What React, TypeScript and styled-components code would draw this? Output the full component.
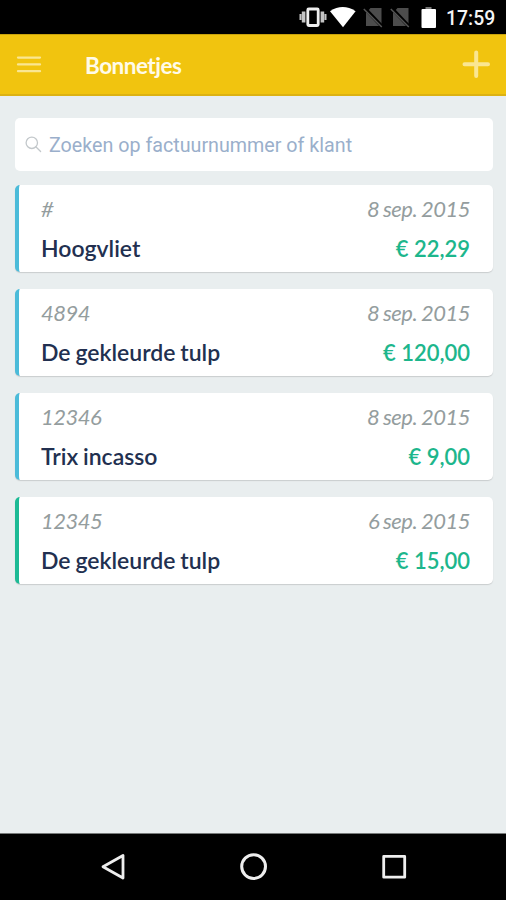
import React from 'react';
import styled, { createGlobalStyle } from 'styled-components';

const GlobalStyle = createGlobalStyle`
  * { box-sizing: border-box; }
  body { margin: 0; background: #e9eeef; }
`;

const Screen = styled.div`
  display: flex;
  flex-direction: column;
  width: 506px;
  height: 900px;
  overflow: hidden;
  background: #e9eeef;
  font-family: Lato, sans-serif;
`;

const StatusBar = styled.div`
  flex: none;
  display: flex;
  align-items: center;
  justify-content: flex-end;
  height: 34px;
  padding-right: 11px;
  background: #000;
`;

const StatusIcons = styled.svg`
  display: block;
  width: 146px;
  height: 34px;
`;

const Clock = styled.span`
  width: 49px;
  margin-left: 2px;
  color: #f4f4f4;
  font: 500 19.4px/34px Roboto, sans-serif;
  text-align: right;
  white-space: nowrap;
  padding-top: 3px;
`;

const AppBar = styled.header`
  flex: none;
  display: flex;
  align-items: center;
  height: 62px;
  padding: 0 15px 0 16px;
  background: #f1c40f;
  border-top: 1px solid #c9a30c;
  border-bottom: 2px solid #dcb212;
`;

const IconButton = styled.button`
  display: flex;
  padding: 0;
  border: 0;
  background: none;
  svg { display: block; }
`;

const Title = styled.h1`
  flex: 1;
  margin: 2px 0 0 43px;
  color: #fffbe9;
  font-size: 22.5px;
  line-height: 28px;
  font-weight: 700;
  letter-spacing: -0.5px;
`;

const Content = styled.main`
  flex: 1;
  display: flex;
  flex-direction: column;
  padding: 22px 13px 0 15px;
`;

const SearchBox = styled.label`
  display: flex;
  align-items: center;
  height: 53px;
  margin-bottom: 14px;
  padding-left: 10px;
  border-radius: 5px;
  background: #fff;
  svg { flex: none; display: block; }
`;

const SearchInput = styled.input`
  flex: 1;
  margin-left: 7px;
  padding: 3px 0 0;
  border: 0;
  outline: 0;
  background: none;
  font: 400 19.7px/26px Roboto, sans-serif;
  &::placeholder { color: #9aafcb; opacity: 1; }
`;

const ReceiptList = styled.div`
  display: flex;
  flex-direction: column;
  gap: 17px;
`;

const Receipt = styled.article<{ $accent: string }>`
  display: grid;
  grid-template-columns: 1fr auto;
  grid-template-rows: 38px 39px;
  height: 87px;
  padding: 5px 23px 0 22px;
  border-left: 4px solid ${(p) => p.$accent};
  border-radius: 5px;
  background: #fff;
  box-shadow: 0 1px 1px #c9cdce;
  white-space: nowrap;
`;

const ReceiptNumber = styled.span`
  color: #949d9e;
  font-size: 22px;
  line-height: 38px;
  font-style: italic;
  font-weight: 400;
  letter-spacing: -0.5px;
`;

const ReceiptDate = styled(ReceiptNumber)`
  text-align: right;
  word-spacing: -0.8px;
`;

const Customer = styled.span`
  color: #223050;
  font-size: 23px;
  line-height: 40px;
  font-weight: 600;
  word-spacing: -0.9px;
`;

const Amount = styled.span`
  color: #1db68c;
  font-size: 22px;
  line-height: 41px;
  font-weight: 600;
  text-align: right;
`;

const NavBar = styled.nav`
  flex: none;
  display: flex;
  align-items: center;
  justify-content: space-between;
  height: 67px;
  padding: 0 98px 0 100px;
  background: #000;
  border-top: 1px solid #777a7a;
`;

const BLUE = '#4bbbd9';
const GREEN = '#1dba95';

const receipts = [
  { id: '#', date: '8 sep. 2015', customer: 'Hoogvliet', amount: '€ 22,29', accent: BLUE },
  { id: '4894', date: '8 sep. 2015', customer: 'De gekleurde tulp', amount: '€ 120,00', accent: BLUE },
  { id: '12346', date: '8 sep. 2015', customer: 'Trix incasso', amount: '€ 9,00', accent: BLUE },
  { id: '12345', date: '6 sep. 2015', customer: 'De gekleurde tulp', amount: '€ 15,00', accent: GREEN },
];

export default function App() {
  return (
    <Screen>
      <GlobalStyle />
      <StatusBar>
        <StatusIcons viewBox="298 0 146 34">
          <path
            d="M299.5 14h2v6h-2zM301.8 11.5h3.6v11h-3.6zM320.6 11.5h3.6v11h-3.6zM324.5 14h2v6h-2z"
            fill="#c4c4c4"
          />
          <rect x="307.8" y="9" width="10.4" height="16.5" rx="1" fill="none" stroke="#eee" strokeWidth="2.8" />
          <path d="M330 11.2Q342.7 2.8 355.6 11.2L343 27.3Z" fill="#fff" />
          {[0, 27].map((dx) => (
            <g key={dx} transform={`translate(${dx} 0)`}>
              <path d="M370.5 8H381.5V26H366V13Z" fill="#4c4c4c" />
              <path d="M365 8.5L382.5 27" stroke="#000" strokeWidth="3.5" />
              <path d="M363.8 9L381.8 27" stroke="#555" strokeWidth="1.5" />
            </g>
          ))}
          <path d="M425.5 7h6v2h-6z" fill="#777" />
          <rect x="421.5" y="9" width="14.5" height="19" rx="1" fill="#fff" />
        </StatusIcons>
        <Clock>17:59</Clock>
      </StatusBar>
      <AppBar>
        <IconButton aria-label="Menu">
          <svg width="26" height="20" viewBox="0 0 26 20">
            <path d="M2 2.6H24M2 9.4H24M2 16.2H24" stroke="#fae692" strokeWidth="2.3" strokeLinecap="round" />
          </svg>
        </IconButton>
        <Title>Bonnetjes</Title>
        <IconButton aria-label="Toevoegen">
          <svg width="29" height="29" viewBox="0 0 29 29">
            <path d="M2.5 14.2H26M14.2 2.5V26" stroke="#fae692" strokeWidth="4" strokeLinecap="round" />
          </svg>
        </IconButton>
      </AppBar>
      <Content>
        <SearchBox>
          <svg width="17" height="17" viewBox="0 0 17 17" fill="none" stroke="#c3c8cb" strokeWidth="1.3">
            <circle cx="6.8" cy="6.8" r="5.7" />
            <path d="M10.8 10.8L15.6 15.5" strokeLinecap="round" />
          </svg>
          <SearchInput placeholder="Zoeken op factuurnummer of klant" />
        </SearchBox>
        <ReceiptList>
          {receipts.map((r) => (
            <Receipt key={r.id} $accent={r.accent}>
              <ReceiptNumber>{r.id}</ReceiptNumber>
              <ReceiptDate>{r.date}</ReceiptDate>
              <Customer>{r.customer}</Customer>
              <Amount>{r.amount}</Amount>
            </Receipt>
          ))}
        </ReceiptList>
      </Content>
      <NavBar>
        <svg width="27" height="28" viewBox="0 0 27 28" fill="none" stroke="#eee" strokeWidth="2.8" strokeLinejoin="round">
          <path d="M23 2.5V25L3 13.8Z" />
        </svg>
        <svg width="28" height="28" viewBox="0 0 28 28" fill="none" stroke="#eee" strokeWidth="3">
          <circle cx="13.6" cy="13.6" r="11.9" />
        </svg>
        <svg width="28" height="28" viewBox="0 0 28 28" fill="none" stroke="#eee" strokeWidth="2.8" strokeLinejoin="round">
          <rect x="3.7" y="3.4" width="21" height="20.8" />
        </svg>
      </NavBar>
    </Screen>
  );
}
